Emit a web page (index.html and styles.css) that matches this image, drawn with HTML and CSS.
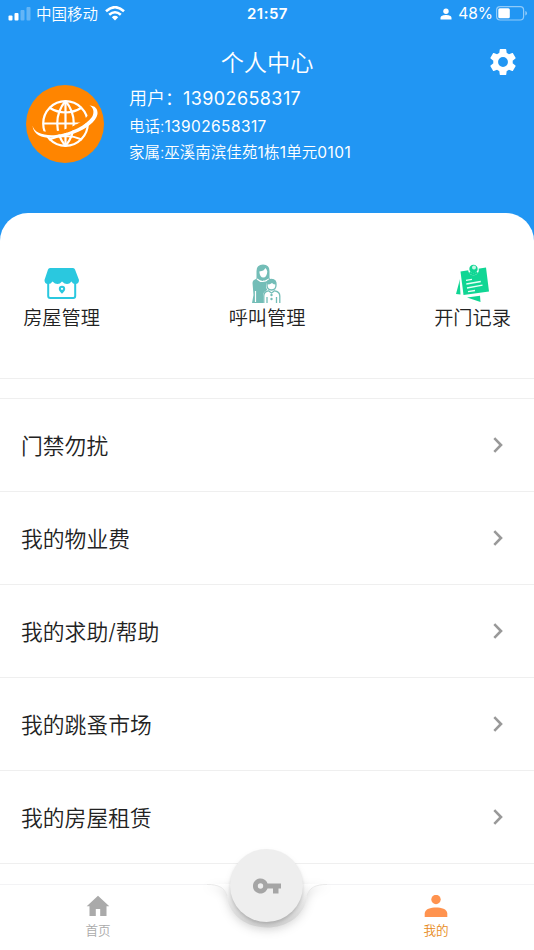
FILE: index.html
```html
<!DOCTYPE html>
<html lang="zh-CN">
<head>
<meta charset="utf-8">
<meta name="viewport" content="width=device-width, initial-scale=1">
<title>个人中心</title>
<link rel="stylesheet" href="styles.css">
</head>
<body>
<div class="app">
  <header class="hero">
    <div class="status">
      <div class="status-left">
        <svg class="signal" viewBox="0 0 23 14"><rect x="0.5" y="8.5" width="4" height="5" rx="1"/><rect x="6.5" y="6" width="4" height="7.5" rx="1"/><g opacity=".3"><rect x="12.5" y="3" width="4" height="10.500" rx="1"/><rect x="18.500" y="0" width="4" height="13.500" rx="1"/></g></svg>
        <span class="carrier">中国移动</span>
        <svg class="wifi" viewBox="0 0 20 15"><g fill="none" stroke="#fff" stroke-width="2.600"><path d="M1 5.200Q10-2.800 19 5.200"/><path d="M4.200 8.800Q10 3.700 15.800 8.800"/></g><path d="M6.800 11.200Q10 8.500 13.200 11.200L10 14.600Z" fill="#fff"/></svg>
      </div>
      <time class="clock">21:57</time>
      <div class="status-right">
        <svg class="mini-user" viewBox="0 0 12 12"><circle cx="6" cy="3.200" r="2.700"/><path d="M.5 11.500V10C.5 7.800 3.500 7 6 7s5.500.8 5.500 3v1.500z"/></svg>
        <span class="percent">48%</span>
        <svg class="battery" viewBox="0 0 32 15"><rect x=".6" y=".6" width="27" height="13.400" rx="3.500" fill="none" stroke="#fff" stroke-opacity=".5" stroke-width="1.200"/><rect x="2.300" y="2.300" width="11.500" height="10" rx="1.500" fill="#fff"/><path d="M29.300 5v4.600q1.700-.6 1.700-2.300T29.300 5z" fill="#fff" opacity=".5"/></svg>
      </div>
    </div>
    <div class="titlebar">
      <h1>个人中心</h1>
      <svg class="gear" viewBox="2 2 20 20"><path d="M19.430 12.980c.04-.32.070-.64.070-.98s-.03-.66-.07-.98l2.110-1.650c.19-.15.240-.42.120-.64l-2-3.460c-.12-.22-.39-.3-.61-.22l-2.490 1c-.52-.4-1.080-.73-1.690-.98l-.38-2.650C14.460 2.180 14.250 2 14 2h-4c-.25 0-.46.180-.49.420l-.38 2.650c-.61.250-1.170.590-1.690.980l-2.490-1c-.23-.09-.49 0-.61.220l-2 3.460c-.13.220-.07.490.12.640l2.110 1.650c-.04.320-.07.650-.07.980s.030.660.070.980l-2.110 1.650c-.19.150-.24.420-.12.640l2 3.460c.12.220.39.300.61.220l2.490-1c.52.400 1.080.730 1.690.980l.38 2.650c.03.240.24.420.49.420h4c.25 0 .46-.18.490-.42l.38-2.650c.61-.25 1.170-.59 1.690-.98l2.490 1c.23.090.49 0 .61-.22l2-3.460c.12-.22.070-.49-.12-.64l-2.110-1.650zM12 15.800a3.800 3.800 0 1 1 0-7.600 3.800 3.800 0 0 1 0 7.600z"/></svg>
    </div>
    <div class="profile">
      <svg class="avatar" viewBox="0 0 78 78"><circle cx="39" cy="39" r="39" fill="#ff8500"/><g fill="none" stroke="#fff" stroke-width="2.200"><circle cx="39.500" cy="38.500" r="22.300"/><path d="M39.500 16v45M17 38.500h45M23 22.500q16.500 10 33 0M23 54.500q16.500-7 33 0"/><path d="M39.500 16c-11 13-11 32 0 45M39.500 16c11 13 11 32 0 45"/></g><path d="M10 46C18 51 35 49 50 42 60 37 65 32 67 26" fill="none" stroke="#ff8500" stroke-width="4"/><path d="M6.500 40.500C8 48 18 51 30 50 46 48 60 40 66 32 69 27 67 22 63.500 20.500 69 20.500 72 24 71.500 29 70 37 60 44 48 48.500 33 54 8 57 6.500 40.500z" fill="#fff"/></svg>
      <div class="details">
        <div class="user">用户：<span>13902658317</span></div>
        <div class="phone">电话:<span>13902658317</span></div>
        <div class="family">家属:巫溪南滨佳苑<span>1</span>栋<span>1</span>单元<span>0101</span></div>
      </div>
    </div>
  </header>
  <main class="sheet">
    <section class="actions">
      <a class="action">
        <svg viewBox="0 0 40 40"><path d="M8 5h23q1.500 0 2 1.500L37 17q0 4-3.800 4-2.500 0-3.700-2.500Q27.500 21 25 21t-5-2.500Q18 21 15.500 21T10.500 18.500Q9 21 6 21q-3.500 0-3.500-4L6 6.500Q6.500 5 8 5z" fill="#2ac8df"/><path d="M6.200 20v13q0 2 2 2h23q2 0 2-2V20" fill="none" stroke="#2ac8df" stroke-width="2"/><path d="M20 22.700a3.200 3.200 0 0 0-3.200 3.200c0 1.900 1.500 2.600 3.200 4.800 1.700-2.200 3.200-2.900 3.200-4.800a3.200 3.200 0 0 0-3.200-3.200z" fill="#2ac8df"/><circle cx="20" cy="25.800" r="1.100" fill="#fff"/></svg>
        <span>房屋管理</span>
      </a>
      <a class="action">
        <svg viewBox="0 0 40 40"><g fill="#73bdb7"><path d="M9.500 17V8q0-6.500 6.500-6.500T22.500 8v9z"/><path d="M5 40L6.500 32 5.500 20q0-3 3.500-4l3.500-1.500 4 3 4-3 4 2q2 1.500 1.500 4L19 28l-1.500 12z"/></g><path d="M12.300 8.500q5-.5 6-3.500 1.500 1 2 3.500-.5 6-4 6t-4-6z" fill="#fff"/><path d="M10 16q5.500 5 12 0M8.500 39V28" fill="none" stroke="#fff" stroke-width="1.200"/><path d="M16 40v-7q0-5 4.500-5.500-1.500-2-1.500-5 .5-5 5.500-5t5.500 5q0 3-1.500 5 4.500 1 4.500 5.500v7z" fill="#fff"/><g fill="none" stroke="#73bdb7" stroke-width="1.300"><path d="M20 22q-.5-5.500 4.500-5.500T29 22q0 5-4.500 5T20 22M21 27.500l3.500 2.500 3.500-2.500M16.800 40V33q0-4 4-5M32.800 40V33q0-4-4.600-5M20 40V34M29.500 40V34"/></g><g fill="#73bdb7"><path d="M20 21.500q-.5-5 4.500-5t4.500 5q-2.500 0-4-1.500-2 1.500-5 1.500z"/><circle cx="24.500" cy="32" r="1.200"/><circle cx="24.500" cy="36" r="1.200"/></g></svg>
        <span>呼叫管理</span>
      </a>
      <a class="action">
        <svg viewBox="0 0 40 40"><g fill="#10d694"><path d="M7 16L3 31l4.500.5L6.800 20z"/><path d="M14 34.500l13.500 4.500-.5-6.200z"/><path d="M7.500 8.500L33 4.500 36 28.500 10.500 32z"/></g><circle cx="20.500" cy="7" r="5.300" fill="#fff"/><circle cx="20.500" cy="6" r="4.200" fill="#10d694"/><path d="M16.500 9.500q4 3.500 8 0" fill="none" stroke="#10d694" stroke-width="2"/><circle cx="21" cy="4.500" r="2" fill="#c6f6e5"/><path d="M13 17.300l6-1M13.300 21l14.500-2.500M14 25L29.500 22.200M15 28.700l7-1.200" fill="none" stroke="#e8fff6" stroke-width="1.300"/></svg>
        <span>开门记录</span>
      </a>
    </section>
    <nav class="menu">
      <a class="row"><span>门禁勿扰</span><svg viewBox="0 0 10 16"><path d="M1.300 1.200L8 8l-6.700 6.800"/></svg></a>
      <a class="row"><span>我的物业费</span><svg viewBox="0 0 10 16"><path d="M1.300 1.200L8 8l-6.700 6.800"/></svg></a>
      <a class="row"><span>我的求助/帮助</span><svg viewBox="0 0 10 16"><path d="M1.300 1.200L8 8l-6.700 6.800"/></svg></a>
      <a class="row"><span>我的跳蚤市场</span><svg viewBox="0 0 10 16"><path d="M1.300 1.200L8 8l-6.700 6.800"/></svg></a>
      <a class="row"><span>我的房屋租赁</span><svg viewBox="0 0 10 16"><path d="M1.300 1.200L8 8l-6.700 6.800"/></svg></a>
    </nav>
  </main>
  <footer class="tabbar">
    <svg class="notch" viewBox="0 0 120 60">
      <defs><linearGradient id="basin" x1="0" y1="0" x2="0" y2="1"><stop offset="0" stop-color="#fff"/><stop offset=".35" stop-color="#ececec"/><stop offset="1" stop-color="#d4d4d4"/></linearGradient></defs>
      <path d="M0 0C12 0 18 4 20 12C25 54 95 54 100 12C102 4 108 0 120 0Z" fill="url(#basin)"/>
      <path d="M0 .5C12 .5 18 4 20 12" fill="none" stroke="#e9e9e9"/><path d="M120 .5C108 .5 102 4 100 12" fill="none" stroke="#e9e9e9"/>
    </svg>
    <a class="tab">
      <svg viewBox="0 0 24 22"><path d="M12 .8L.7 11.200H3.500V21h6.300v-7h4.400v7h6.300v-9.800h2.800z"/></svg>
      <span>首页</span>
    </a>
    <a class="tab active">
      <svg viewBox="0 0 24 22"><circle cx="12" cy="4.500" r="4.700"/><path d="M.7 22v-3.500C.7 14 7 12.500 12 12.500S23.300 14 23.300 18.500V22z"/></svg>
      <span>我的</span>
    </a>
    <button class="key" aria-label="开门"><svg viewBox="0 0 28 16"><path d="M14.500 5.500A7.500 7.500 0 1 0 14.500 10.500H20V15.500H25.500V10.500H28V5.500ZM7.500 10.700a2.700 2.700 0 1 1 0-5.400 2.700 2.700 0 0 1 0 5.400z"/></svg></button>
  </footer>
</div>
</body>
</html>
```
FILE: styles.css
```css
* { box-sizing: border-box; }
body {
  margin: 0;
  background: #2196f3;
  color: #222;
  font-family: Inter, "Noto Sans CJK SC", sans-serif;
  font-weight: 350;
}
svg { display: block; flex: none; }
.app {
  height: 950px;
  display: flex;
  flex-direction: column;
  overflow: hidden;
}
.hero { height: 213px; flex: none; color: #fff; }
.status {
  height: 28px;
  padding: 0 6px 0 8px;
  display: grid;
  grid-template-columns: 1fr auto 1fr;
  align-items: center;
  font-size: 15px;
  line-height: 26px;
}
.status-left, .status-right { display: flex; align-items: center; }
.status-right { justify-content: flex-end; }
.signal { width: 23px; height: 14px; fill: #fff; }
.carrier { margin: 1px 7px 0 5px; font-size: 15.5px; }
.wifi { width: 20px; height: 15px; margin-top: -2px; }
.clock { font-size: 15px; font-weight: 600; letter-spacing: .5px; margin-left: -1px; }
.mini-user { width: 12px; height: 12px; fill: #fff; margin-right: 6px; }
.percent { font-size: 15.500px; font-weight: 400; margin-right: 3px; }
.battery { width: 32px; height: 15px; margin-top: -1px; }
.titlebar {
  height: 57px;
  padding: 0 18px 0 44px;
  display: flex;
  align-items: center;
  justify-content: space-between;
}
h1 {
  flex: 1;
  margin: 13px 0 0;
  text-align: center;
  font-size: 23.200px;
  line-height: 34px;
  font-weight: 350;
}
.gear { width: 26px; height: 26px; margin-top: 11px; fill: #fff; }
.profile { display: flex; padding-left: 25.500px; gap: 25.500px; }
.avatar { width: 78px; height: 78px; }
.details { padding-top: 1px; font-size: 15.500px; line-height: 26px; white-space: nowrap; }
.details span { font-weight: 400; letter-spacing: .4px; }
.user { font-size: 18px; }
.user span { font-size: 18px; }
.phone span, .family span { font-size: 15.500px; }
.phone { margin-top: 2px; }
.sheet {
  flex: 1;
  background: #fff;
  border-radius: 28px 28px 0 0;
}
.actions {
  height: 166px;
  padding: 50px 23px 0;
  display: flex;
  justify-content: space-between;
  border-bottom: 1px solid #efefef;
}
.action { display: flex; flex-direction: column; align-items: center; width: 77px; }
.action svg { width: 40px; height: 40px; }
.action span { margin-top: 1px; font-size: 19.200px; line-height: 28px; white-space: nowrap; }
.menu { margin-top: 19px; border-top: 1px solid #efefef; }
.row {
  height: 93px;
  padding: 0 31px 0 21px;
  border-bottom: 1px solid #efefef;
  display: flex;
  align-items: center;
  justify-content: space-between;
  font-size: 21.800px;
}
.row span { margin-top: -2px; }
.row svg { width: 10px; height: 16px; fill: none; stroke: #999; stroke-width: 2.600; }
.tabbar {
  position: relative;
  height: 66px;
  flex: none;
  display: flex;
  justify-content: space-between;
  padding: 10px 70px 0;
  border-top: 1px solid #f3f3f5;
  background: #fff;
}
.notch {
  position: absolute;
  left: 207px;
  top: -1px;
  width: 120px;
  height: 60px;
  overflow: visible;
  filter: drop-shadow(0 3px 5px rgba(0, 0, 0, .12));
}
.tab {
  width: 56px;
  display: flex;
  flex-direction: column;
  align-items: center;
  color: #aaa;
  font-size: 12.600px;
  line-height: 18px;
}
.tab svg { width: 24px; height: 22px; fill: currentColor; margin-bottom: 5px; }
.active { color: #e78a19; }
.active svg { fill: #ff934f; }
.key {
  position: absolute;
  left: 230px;
  top: -36px;
  width: 73px;
  height: 73px;
  padding: 0;
  border: 0;
  border-radius: 50%;
  background: #eee;
  display: grid;
  place-items: center;
  box-shadow: 0 2px 3px rgba(0, 0, 0, .14), 0 5px 10px rgba(0, 0, 0, .07);
}
.key svg { width: 28px; height: 16px; fill: #a5a5a5; }
```
